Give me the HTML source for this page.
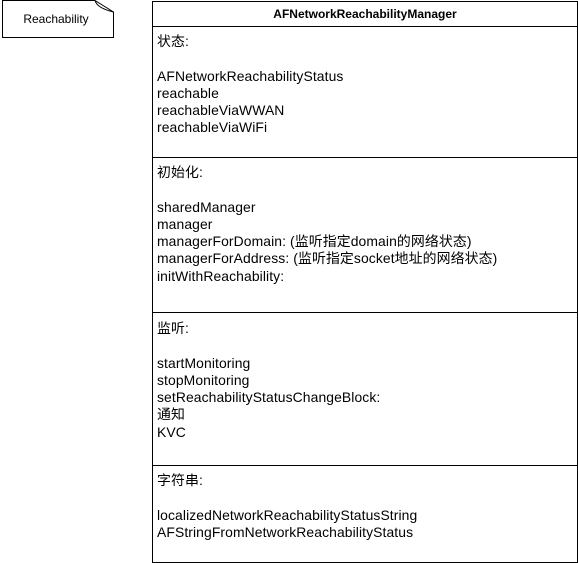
<!DOCTYPE html>
<html><head><meta charset="utf-8"><style>
body{margin:0;width:578px;height:563px;background:#fff;position:relative;overflow:hidden;font-family:"Liberation Sans","Noto Sans CJK SC",sans-serif;font-size:13.9px;color:#000}
.box{position:absolute;left:152px;top:1px;width:424px;height:560px;border:1px solid #000}
.hdr{position:absolute;left:0;top:0;width:424px;height:24px;border-bottom:1px solid #000;text-align:center;font-weight:bold;font-size:12px;line-height:24px}
.div{position:absolute;left:0;width:424px;border-top:1px solid #000}
.sec{position:absolute;left:4px;line-height:17.3px;white-space:pre;letter-spacing:0.1px}
</style></head><body>
<svg style="position:absolute;left:0;top:0" width="120" height="40">
<path d="M2.5 0.5 H95 L113.5 12 V37.5 H2.5 Z" fill="#fff" stroke="#000"/>
<path d="M95 0.5 Q97 8 113.5 12" fill="none" stroke="#000"/>
<text x="56" y="23" text-anchor="middle" font-family="Liberation Sans" font-size="12">Reachability</text>
</svg>
<div class="box">
<div class="hdr">AFNetworkReachabilityManager</div>
<div class="sec" style="top:31px">状态:

AFNetworkReachabilityStatus
reachable
reachableViaWWAN
reachableViaWiFi</div>
<div class="div" style="top:155px"></div>
<div class="sec" style="top:162px">初始化:

sharedManager
manager
managerForDomain: (监听指定domain的网络状态)
managerForAddress: (监听指定socket地址的网络状态)
initWithReachability:</div>
<div class="div" style="top:310px"></div>
<div class="sec" style="top:318px">监听:

startMonitoring
stopMonitoring
setReachabilityStatusChangeBlock:
通知
KVC</div>
<div class="div" style="top:463px"></div>
<div class="sec" style="top:470px">字符串:

localizedNetworkReachabilityStatusString
AFStringFromNetworkReachabilityStatus</div>
</div>
</body></html>
